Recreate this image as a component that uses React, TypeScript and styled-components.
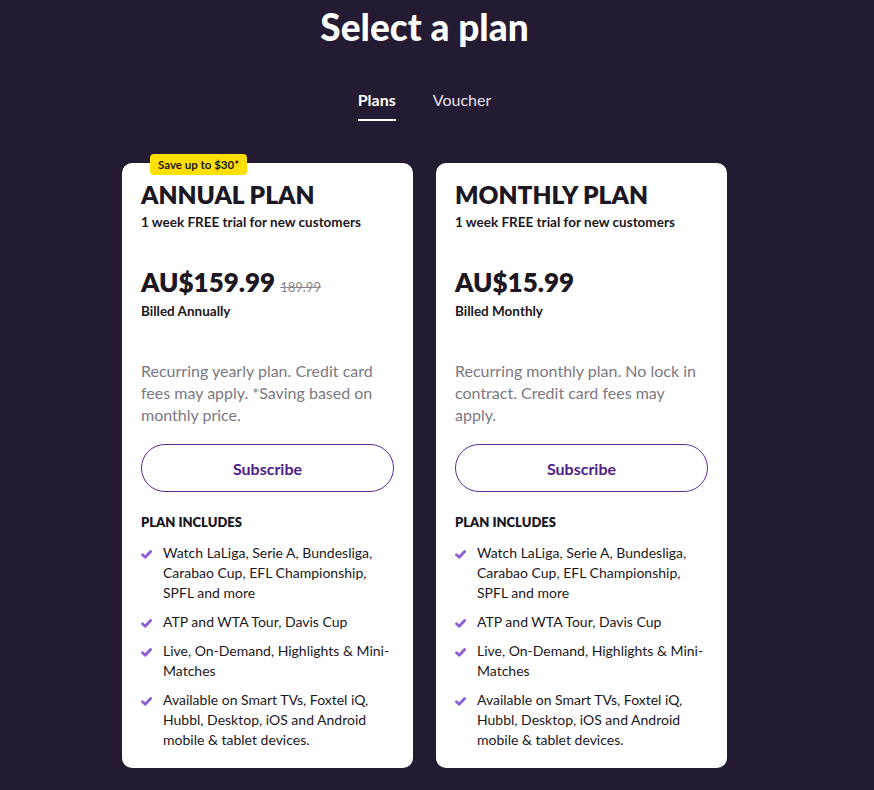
import React from "react";
import styled, { createGlobalStyle } from "styled-components";

const Global = createGlobalStyle`
  html, body { margin: 0; padding: 0; background: #241a32; }
  body { font-family: Lato, "Liberation Sans", sans-serif; -webkit-font-smoothing: antialiased; }
  * { box-sizing: border-box; }
`;

const Page = styled.div`
  min-height: 790px;
  padding-right: 25px;
  display: flex;
  flex-direction: column;
  align-items: center;
`;

const Title = styled.h1`
  margin: 5px 0 0;
  font-family: Lato, sans-serif;
  font-weight: 900;
  font-size: 37px;
  line-height: 44px;
  color: #ffffff;
`;

const Tabs = styled.div`
  display: flex;
  gap: 37px;
  margin-top: 41px;
`;

const Tab = styled.div<{ $active?: boolean }>`
  font-size: 16px;
  line-height: 20px;
  font-weight: ${(p) => (p.$active ? 700 : 400)};
  color: ${(p) => (p.$active ? "#ffffff" : "#e4e0ea")};
  padding-bottom: 9px;
  border-bottom: 2px solid ${(p) => (p.$active ? "#ffffff" : "transparent")};
`;

const Cards = styled.div`
  display: flex;
  gap: 23px;
  margin-top: 42px;
`;

const Card = styled.div`
  position: relative;
  width: 291px;
  background: #ffffff;
  border-radius: 10px;
  padding: 17px 19px 18px 19px;
  display: flex;
  flex-direction: column;
  color: #1c1722;
`;

const Badge = styled.div`
  position: absolute;
  top: -9px;
  left: 28px;
  background: #ffe000;
  color: #1c1722;
  font-size: 11.5px;
  font-weight: 700;
  line-height: 21px;
  padding: 0 8px;
  border-radius: 4px;
`;

const PlanName = styled.h2`
  margin: 0;
  font-size: 24.5px;
  line-height: 30px;
  font-weight: 800;
`;

const Trial = styled.div`
  margin-top: 3px;
  font-size: 13.5px;
  line-height: 18px;
  font-weight: 700;
`;

const PriceRow = styled.div`
  margin-top: 35px;
  display: flex;
  align-items: baseline;
  gap: 5px;
`;

const Price = styled.span`
  font-size: 26px;
  line-height: 32px;
  font-weight: 800;
`;

const OldPrice = styled.span`
  font-size: 13px;
  color: #8a8590;
  text-decoration: line-through;
`;

const Billed = styled.div`
  margin-top: 4px;
  font-size: 13.5px;
  line-height: 18px;
  font-weight: 700;
`;

const Description = styled.p`
  margin: 40px 0 0;
  font-size: 16px;
  line-height: 22px;
  color: #7c7882;
`;

const Subscribe = styled.button`
  margin-top: 18px;
  height: 48px;
  width: 100%;
  background: #ffffff;
  border: 1px solid #5b2a9b;
  border-radius: 24px;
  color: #4e2188;
  font-family: inherit;
  font-size: 16px;
  font-weight: 700;
  cursor: pointer;
`;

const IncludesHead = styled.div`
  margin-top: 21px;
  font-size: 13px;
  line-height: 18px;
  font-weight: 800;
`;

const List = styled.ul`
  list-style: none;
  margin: 12px 0 0;
  padding: 0;
  display: flex;
  flex-direction: column;
  gap: 9px;
`;

const Item = styled.li`
  display: flex;
  gap: 11px;
  font-size: 14px;
  line-height: 20px;
`;

const CheckWrap = styled.span`
  flex: none;
  width: 11px;
  height: 20px;
  padding-top: 7px;
  display: flex;
  align-items: flex-start;
`;

const Check = () => (
  <CheckWrap>
    <svg width="11" height="9" viewBox="0 0 11 9">
      <path d="M1.5 4.8 L4.2 7.3 L9.6 1.5" fill="none" stroke="#8d5ed6" strokeWidth="2.8" strokeLinecap="round" strokeLinejoin="round" />
    </svg>
  </CheckWrap>
);

const features = [
  "Watch LaLiga, Serie A, Bundesliga, Carabao Cup, EFL Championship, SPFL and more",
  "ATP and WTA Tour, Davis Cup",
  "Live, On-Demand, Highlights & Mini-Matches",
  "Available on Smart TVs, Foxtel iQ, Hubbl, Desktop, iOS and Android mobile & tablet devices.",
];

type Plan = {
  name: string;
  price: string;
  old?: string;
  billed: string;
  desc: string;
  badge?: string;
};

const plans: Plan[] = [
  {
    name: "ANNUAL PLAN",
    price: "AU$159.99",
    old: "189.99",
    billed: "Billed Annually",
    desc: "Recurring yearly plan. Credit card fees may apply. *Saving based on monthly price.",
    badge: "Save up to $30*",
  },
  {
    name: "MONTHLY PLAN",
    price: "AU$15.99",
    billed: "Billed Monthly",
    desc: "Recurring monthly plan. No lock in contract. Credit card fees may apply.",
  },
];

export default function App() {
  return (
    <>
      <Global />
      <Page>
        <Title>Select a plan</Title>
        <Tabs>
          <Tab $active>Plans</Tab>
          <Tab>Voucher</Tab>
        </Tabs>
        <Cards>
          {plans.map((p) => (
            <Card key={p.name}>
              {p.badge && <Badge>{p.badge}</Badge>}
              <PlanName>{p.name}</PlanName>
              <Trial>1 week FREE trial for new customers</Trial>
              <PriceRow>
                <Price>{p.price}</Price>
                {p.old && <OldPrice>{p.old}</OldPrice>}
              </PriceRow>
              <Billed>{p.billed}</Billed>
              <Description>{p.desc}</Description>
              <Subscribe>Subscribe</Subscribe>
              <IncludesHead>PLAN INCLUDES</IncludesHead>
              <List>
                {features.map((f) => (
                  <Item key={f}>
                    <Check />
                    <span>{f}</span>
                  </Item>
                ))}
              </List>
            </Card>
          ))}
        </Cards>
      </Page>
    </>
  );
}
